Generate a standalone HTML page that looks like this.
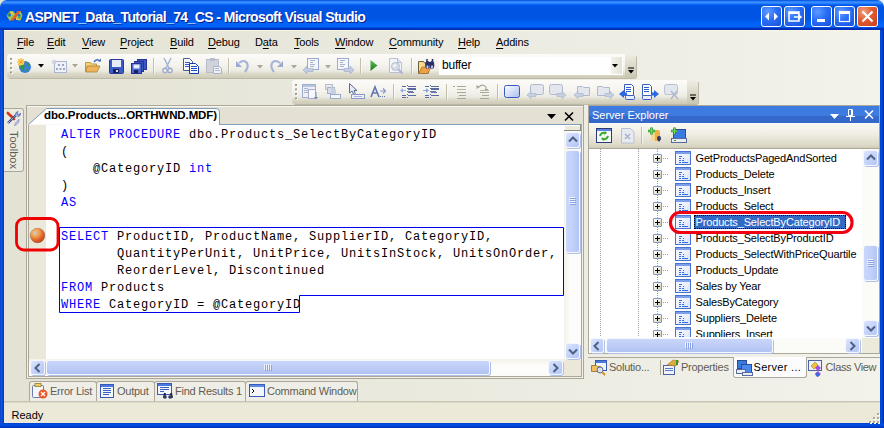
<!DOCTYPE html>
<html><head><meta charset="utf-8">
<style>
*{margin:0;padding:0;box-sizing:border-box}
html,body{width:884px;height:428px;overflow:hidden;background:linear-gradient(to right,#e3e2d4,#f3f2eb)}
body{position:relative;font-family:"Liberation Sans",sans-serif;font-size:11px;color:#000}
.a{position:absolute}
.mono{font-family:"Liberation Mono",monospace}
svg{position:absolute;overflow:visible}
/* window frame */
#title{left:0;top:0;width:884px;height:30px;border-radius:7px 7px 0 0;
background:linear-gradient(to bottom,#0040c8 0px,#1c78ff 1px,#3a8dff 2px,#3a8dff 3px,#1470ff 4px,#0258e8 5px,#0054e3 8px,#0054e3 19px,#005cf0 21px,#0064f8 24px,#0064f8 27px,#0038c8 28px,#0028b0 30px)}
#lb{left:0;top:30px;width:4px;height:398px;background:linear-gradient(to right,#0030b0,#1660e8 1px,#0050e0 2px,#0040d0 3px)}
#rb{left:880px;top:30px;width:4px;height:398px;background:linear-gradient(to right,#0040d0,#0050e0 1px,#0048d8 2px,#0030b0 3px)}
#bb{left:0;top:423px;width:884px;height:5px;background:linear-gradient(to bottom,#0040d0,#0050e8 2px,#0038c0 4px)}
.ttxt{left:25px;top:9px;font-weight:bold;font-size:14px;letter-spacing:-0.6px;color:#fff;text-shadow:1px 1px 0 #0a1e8c}
.tbtn{top:6px;width:21px;height:21px;border:1px solid #fff;border-radius:3px;
background:radial-gradient(circle at 30% 25%,#5d9bff 0%,#2a6ef5 45%,#1650e0 100%)}
.tclose{background:radial-gradient(circle at 30% 25%,#f0a080 0%,#e25a30 45%,#c8401c 100%)}
/* menu */
#menu{left:4px;top:30px;width:876px;height:24px;border-top:1px solid #faf6e0}
.mi{top:7px;font-size:11px;letter-spacing:-0.15px}
.mi u{text-decoration:underline;text-decoration-thickness:1px;text-underline-offset:1.5px}
/* toolbars */
.tb{border-radius:3px;background:linear-gradient(to bottom,#fcfbf8 0%,#f4f3ed 45%,#ecebe2 70%,#dcd9ca 82%,#cdcab7 100%);box-shadow:1px 1px 0 #bcb9a6}
.grip{width:3px;height:16px;background:radial-gradient(circle at 1px 1px,#9a9784 0,#9a9784 1px,transparent 1.2px) 0 0/4px 4.5px,radial-gradient(circle at 2px 2px,#fff 0,#fff 1px,transparent 1.2px) 0 0/4px 4.5px}
.sep{width:1px;height:16px;background:#c2bfac;box-shadow:1px 0 0 rgba(255,255,255,0.5)}

.code{font-family:"Liberation Mono",monospace;font-size:12px;letter-spacing:0.8px;line-height:17px;white-space:pre;color:#000}
.kw{color:#0000ff}
.sbtn{border-radius:3px;background:linear-gradient(135deg,#dbe5fd 0%,#c6d4fa 50%,#b4c6f4 100%);border:1px solid #f4f7fe;box-shadow:1px 1px 0 #b0c0e8}
.thumb{border-radius:3px;background:linear-gradient(to right,#cad8fc,#bfcff9 60%,#b2c4f3);border:1px solid #f4f7fe;box-shadow:1px 1px 0 #b0c0e8}

.pbox{width:9px;height:9px;border:1px solid #7a99c6;border-radius:1px;background:linear-gradient(135deg,#fff,#e8e6d8 60%,#cfcbb4)}
.pbox:after{content:"";position:absolute;left:1px;top:3px;width:5px;height:1px;background:#000;box-shadow:0 0 0 0 #000}
.pbox:before{content:"";position:absolute;left:3px;top:1px;width:1px;height:5px;background:#000}
.tabtxt{color:#5f5d54;font-size:11px;letter-spacing:-0.25px}

.btab{top:381px;height:20px;background:#efeee6;border:1px solid #aca899;border-bottom:none;border-radius:3px 3px 0 0}
</style></head><body>
<svg width="0" height="0" style="position:absolute"><defs><g id="spic"><rect x="0.5" y="0.5" width="15" height="13" fill="url(#spg)" stroke="#4a72d0"/><rect x="1" y="1" width="14" height="2" fill="#7aa0ec"/><path d="M4 5.5h3M4 7.5h2M8 7.5h1M4 9.5h2M7 9.5h2M4 11.5h2M7 11.5h6" stroke="#3a6ae0"/></g><linearGradient id="spg" x1="0" y1="0" x2="1" y2="1"><stop offset="0" stop-color="#ffffff"/><stop offset="1" stop-color="#d8e2fa"/></linearGradient></defs></svg><div id="title" class="a"></div>
<div id="lb" class="a"></div><div id="rb" class="a"></div><div id="bb" class="a"></div>
<div class="a ttxt">ASPNET_Data_Tutorial_74_CS - Microsoft Visual Studio</div>

<div class="a tbtn" style="left:761px"></div>
<div class="a tbtn" style="left:784px"></div>
<div class="a tbtn" style="left:811px"></div>
<div class="a tbtn" style="left:834px"></div>
<div class="a tbtn tclose" style="left:857px"></div>


<!-- title icon -->
<svg style="left:6px;top:10px" width="17" height="12" viewBox="0 0 17 12">
<path d="M0.5 5.5 L4 1 H7 L9.5 4 L12 1 H14.5 L16.5 5.5 L14.5 10.5 H12 L8.5 7 L5 10.5 H3.5Z" fill="#9cc85a"/>
<path d="M1 5.5 L3.5 2 L5 4 L3 7Z" fill="#4a9a3a"/><path d="M15.5 5.5 L13.5 9 L12 7 L14 4Z" fill="#5aa848"/>
<path d="M4 2 H8 L6 5Z M10 8 L13 10 H10Z" fill="#f8c050"/>
<path d="M4 10.5 L12 1 H15 L7.5 10.5Z" fill="#e85a20"/>
<circle cx="3.8" cy="5.3" r="1.2" fill="#1a6af0"/><circle cx="12.8" cy="5.3" r="1.2" fill="#1a6af0"/></svg>
<!-- title buttons glyphs -->
<svg style="left:761px;top:6px" width="21" height="21"><path d="M4 10.5 L8 6.5 L8 14.5Z M17 10.5 L13 6.5 L13 14.5Z" fill="#fff"/></svg>
<svg style="left:784px;top:6px" width="21" height="21"><rect x="5" y="6" width="10" height="9" fill="none" stroke="#fff" stroke-width="1.5"/><rect x="5" y="6" width="10" height="2" fill="#fff"/><path d="M10 11 h7 M14 8.5 L17 11 L14 13.5" stroke="#fff" stroke-width="1.5" fill="none"/></svg>
<svg style="left:811px;top:6px" width="21" height="21"><rect x="6" y="13" width="8" height="3" fill="#fff"/></svg>
<svg style="left:834px;top:6px" width="21" height="21"><rect x="5.5" y="5.5" width="10" height="10" fill="none" stroke="#fff" stroke-width="1.2"/><rect x="5" y="5" width="11" height="3" fill="#fff"/></svg>
<svg style="left:857px;top:6px" width="21" height="21"><path d="M5.5 5.5 L15.5 15.5 M15.5 5.5 L5.5 15.5" stroke="#fff" stroke-width="2.2"/></svg>
<div id="menu" class="a"></div>
<div class="a mi" style="left:17px;top:36px"><u>F</u>ile</div>
<div class="a mi" style="left:47px;top:36px"><u>E</u>dit</div>
<div class="a mi" style="left:82px;top:36px"><u>V</u>iew</div>
<div class="a mi" style="left:120px;top:36px"><u>P</u>roject</div>
<div class="a mi" style="left:170px;top:36px"><u>B</u>uild</div>
<div class="a mi" style="left:208px;top:36px"><u>D</u>ebug</div>
<div class="a mi" style="left:255px;top:36px">D<u>a</u>ta</div>
<div class="a mi" style="left:294px;top:36px"><u>T</u>ools</div>
<div class="a mi" style="left:335px;top:36px"><u>W</u>indow</div>
<div class="a mi" style="left:389px;top:36px"><u>C</u>ommunity</div>
<div class="a mi" style="left:458px;top:36px"><u>H</u>elp</div>
<div class="a mi" style="left:496px;top:36px"><u>A</u>ddins</div>

<div class="a tb" style="left:7px;top:54px;width:629px;height:24px"></div>

<!-- toolbar1 icons -->
<div class="a grip" style="left:10px;top:58px"></div>
<svg style="left:16px;top:58px" width="16" height="16">
<circle cx="9" cy="9" r="6" fill="#3c7ee0"/><path d="M5 6 Q8 5 9 8 Q7 10 8 13 Q5 12 4 9Z M10 4 Q14 5 14 9 Q12 8 11 6Z M10 11 Q13 11 12 14 Q10 14 10 11Z" fill="#2e9a3a"/>
<circle cx="5" cy="4" r="3.2" fill="#fbe07a"/><path d="M5 0v8M1 4h8M2 1l6 6M8 1l-6 6" stroke="#f4a020" stroke-width="0.8"/></svg>
<svg style="left:38px;top:64px" width="7" height="4"><path d="M0 0h6L3 3.5Z" fill="#000"/></svg>
<svg style="left:51px;top:59px" width="17" height="15">
<rect x="3.5" y="2.5" width="12" height="11" fill="#f0f0f6" stroke="#a9b6d3"/><g fill="#9aa8c6"><rect x="7" y="5" width="2" height="2"/><rect x="11" y="5" width="2" height="2"/><rect x="5" y="9" width="2" height="2"/><rect x="8.5" y="9" width="2" height="2"/><rect x="12" y="9" width="2" height="2"/></g>
<path d="M0 3h6M3 0v6M1 1l4 4M5 1l-4 4" stroke="#c8cede" stroke-width="0.8"/></svg>
<svg style="left:72px;top:64px" width="7" height="4"><path d="M0 0h6L3 3.5Z" fill="#aaa797"/></svg>
<svg style="left:85px;top:58px" width="17" height="16">
<path d="M0.5 4.5h5l1 1.5h5v7.5h-11Z" fill="#f5d478" stroke="#b99a48" stroke-width="1"/>
<path d="M2 8h13l-3 6h-11Z" fill="#f2b458" stroke="#a8803a" stroke-width="0.8"/>
<path d="M9 4 Q12 0 15 3" stroke="#4a6ab8" stroke-width="1.5" fill="none"/><path d="M13 3.5h3v-3Z" fill="#4a6ab8"/></svg>
<svg style="left:109px;top:59px" width="15" height="15">
<rect x="0.5" y="0.5" width="14" height="14" rx="1" fill="#3a5cc8" stroke="#2a3a98"/><rect x="3" y="1" width="9" height="7" fill="#e8ecf8"/><rect x="4" y="10" width="6" height="4" fill="#1a2060"/><rect x="7" y="11" width="2" height="2" fill="#dde"/></svg>
<svg style="left:131px;top:59px" width="16" height="15">
<rect x="6.5" y="0.5" width="9" height="10" fill="#3a58c0" stroke="#28309a"/><rect x="3.5" y="2.5" width="9" height="10" fill="#3a58c0" stroke="#28309a"/><rect x="0.5" y="4.5" width="10" height="10" fill="#4a68d0" stroke="#28309a"/><rect x="2.5" y="5.5" width="6" height="4" fill="#e8ecf8"/><rect x="3" y="11" width="4" height="3" fill="#1a2060"/></svg>
<div class="a sep" style="left:153px;top:58px"></div>
<svg style="left:162px;top:58px" width="11" height="16"><path d="M2 0 L7 10 M9 0 L4 10" stroke="#a8b4d0" stroke-width="1.5"/><circle cx="3" cy="12.5" r="2.2" fill="none" stroke="#a0acd0" stroke-width="1.4"/><circle cx="8" cy="12.5" r="2.2" fill="none" stroke="#a0acd0" stroke-width="1.4"/></svg>
<svg style="left:183px;top:58px" width="16" height="16">
<path d="M0.5 0.5h6l3 3v9h-9Z" fill="#f6f8fc" stroke="#4a5c90"/><path d="M2 4.5h5M2 6.5h5M2 8.5h5" stroke="#3060c8"/>
<path d="M6.5 5.5h6l3 3v7h-9Z" fill="#f6f8fc" stroke="#1838a8"/><path d="M8 8.5h6M8 10.5h6M8 12.5h6" stroke="#2050c8"/></svg>
<svg style="left:206px;top:58px" width="17" height="16">
<rect x="0.5" y="1.5" width="12" height="13" fill="#d0d2dc" stroke="#b8bccc"/><rect x="4" y="0" width="5" height="3" fill="#b8bccc"/>
<path d="M7.5 8.5h6l2 2v5h-8Z" fill="#eef0f6" stroke="#a8b2cc"/><path d="M9 10.5h4M9 12.5h5" stroke="#b0b8d0"/></svg>
<div class="a sep" style="left:228px;top:58px"></div>
<svg style="left:236px;top:58px" width="14" height="15"><path d="M3 5 Q8 1 11 5 Q13 9 9 14" stroke="#a6b4d6" stroke-width="2.2" fill="none"/><path d="M0 3v6h6Z" fill="#9aaad0"/></svg>
<svg style="left:257px;top:65px" width="7" height="4"><path d="M0 0h6L3 3.5Z" fill="#aaa797"/></svg>
<svg style="left:269px;top:58px" width="14" height="15"><path d="M11 5 Q6 1 3 5 Q1 9 5 14" stroke="#a6b4d6" stroke-width="2.2" fill="none"/><path d="M14 3v6h-6Z" fill="#9aaad0"/></svg>
<svg style="left:291px;top:65px" width="7" height="4"><path d="M0 0h6L3 3.5Z" fill="#aaa797"/></svg>
<svg style="left:303px;top:58px" width="17" height="16">
<rect x="4.5" y="0.5" width="11" height="11" fill="#f4f6fa" stroke="#9aaad0"/><path d="M7 2.5h5M7 4.5h3M7 6.5h5M7 8.5h4" stroke="#a8b4d0"/>
<path d="M0 12 L4 8 V10.5 H10 V13.5 H4 V16Z" fill="#c4cce0" stroke="#9aa8cc" stroke-width="0.6"/></svg>
<svg style="left:325px;top:65px" width="7" height="4"><path d="M0 0h6L3 3.5Z" fill="#aaa797"/></svg>
<svg style="left:337px;top:58px" width="17" height="16">
<rect x="0.5" y="0.5" width="11" height="11" fill="#f4f6fa" stroke="#9aaad0"/><path d="M3 2.5h5M3 4.5h3M3 6.5h5M3 8.5h4" stroke="#a8b4d0"/>
<path d="M17 12 L13 8 V10.5 H7 V13.5 H13 V16Z" fill="#c4cce0" stroke="#9aa8cc" stroke-width="0.6"/></svg>
<div class="a sep" style="left:360px;top:58px"></div>
<svg style="left:370px;top:60px" width="8" height="12"><defs><linearGradient id="plg" x1="0" y1="0" x2="0" y2="1"><stop offset="0" stop-color="#5ac05a"/><stop offset="1" stop-color="#1a7a1a"/></linearGradient></defs><path d="M0.5 0 L7.5 5.5 L0.5 11Z" fill="url(#plg)"/></svg>
<svg style="left:389px;top:58px" width="17" height="16">
<path d="M0.5 0.5h8l4 4v10h-12Z" fill="#f2f4fa" stroke="#b8c0d8"/><path d="M8.5 0.5v4h4" fill="#dde2f0" stroke="#b8c0d8"/>
<circle cx="6.5" cy="8.5" r="4" fill="#d6dae6" stroke="#b4bccc"/><circle cx="5.5" cy="7.5" r="1.8" fill="#eef0f6"/><path d="M9.5 11.5l4 4" stroke="#a8b4d8" stroke-width="2"/></svg>
<div class="a sep" style="left:411px;top:58px"></div>
<svg style="left:418px;top:58px" width="17" height="16">
<path d="M0.5 3.5h5l1 1.5h4v10h-10Z" fill="#f8dc88" stroke="#6a6040"/><path d="M0.5 15.5 L4 9 h9 l-3 6.5Z" fill="#f0a040" stroke="#8a6020" stroke-width="0.6"/>
<ellipse cx="9.5" cy="7" rx="2.3" ry="4" fill="#2a3068"/><ellipse cx="14" cy="7" rx="2.3" ry="4" fill="#2a3068"/><rect x="9.5" y="4" width="4.5" height="3" fill="#2a3068"/>
<ellipse cx="9.5" cy="9" rx="1" ry="1.8" fill="#c8d0f0"/><ellipse cx="14" cy="9" rx="1" ry="1.8" fill="#c8d0f0"/><path d="M9 1v3M14.5 1v3" stroke="#2a3068" stroke-width="1.5"/></svg>
<!-- combo -->
<div class="a" style="left:439px;top:57px;width:184px;height:18px;background:#fff"></div>
<div class="a" style="left:442px;top:58px;font-size:12px;letter-spacing:-0.2px">buffer</div>
<div class="a" style="left:610px;top:57px;width:12px;height:17px;background:linear-gradient(to right,#f3f2ea,#e4e2d4);border-left:1px solid #fff"></div>
<svg style="left:612px;top:64px" width="7" height="4"><path d="M0 0h6L3 3.5Z" fill="#000"/></svg>
<div class="a" style="left:625px;top:54px;width:11px;height:24px;border-radius:0 3px 3px 0;background:linear-gradient(to bottom,#f0eee4,#d8d5c4 60%,#c8c5b2)"></div><svg style="left:627px;top:67px" width="8" height="8"><path d="M1 1h6" stroke="#000"/><path d="M1 3h6L4 6.5Z" fill="#000"/></svg>
<div class="a tb" style="left:292px;top:80px;width:406px;height:24px"></div>

<!-- toolbar2 icons -->
<div class="a grip" style="left:295px;top:84px"></div>
<svg style="left:302px;top:84px" width="16" height="16">
<rect x="0.5" y="0.5" width="13" height="13" fill="#eef0f6" stroke="#a0acd0"/><rect x="1" y="1" width="12" height="2" fill="#b8c4e0"/><path d="M2 4.5h4M2 6.5h4M2 8.5h4" stroke="#a8b4d0"/>
<rect x="6.5" y="5.5" width="7" height="9" fill="#f8f8fc" stroke="#a0acd0"/><path d="M14 8v7M12.5 13.5l1.5 1.5 1.5-1.5" stroke="#8898c8"/></svg>
<svg style="left:325px;top:84px" width="16" height="16">
<rect x="0.5" y="0.5" width="7" height="5" fill="#e8eaf0" stroke="#b8bccc"/><rect x="2.5" y="3.5" width="7" height="6" fill="#d8dce8" stroke="#a8b0c8"/>
<path d="M6 2 L11 6 V11 H6Z" fill="#c8d0e4"/><rect x="5.5" y="10.5" width="10" height="4" fill="#f4f6fa" stroke="#9aaad0"/></svg>
<svg style="left:349px;top:83px" width="16" height="17">
<path d="M0.5 0.5 V10 L3 8 L5 12 L6.5 11.5 L5 7.5 H8Z" fill="#e8ecf4" stroke="#5a6a98"/><rect x="2.5" y="11.5" width="13" height="4" fill="#eef0f8" stroke="#8898c8"/><path d="M5 13.5h8" stroke="#a8b4d8"/></svg>
<svg style="left:371px;top:85px" width="16" height="14">
<path d="M0 12 L4 2 L8 12 M2 8h4" stroke="#6078b0" stroke-width="1.6" fill="none"/><path d="M9 6h5M12 3.5 L14.5 6 L12 8.5" stroke="#8898c8" stroke-width="1.1" fill="none"/><path d="M9 11.5h1M11 11.5h1M13 11.5h1" stroke="#6078b0"/></svg>
<div class="a sep" style="left:393px;top:84px"></div>
<svg style="left:400px;top:85px" width="17" height="15">
<path d="M7.5 0v15" stroke="#5a6aa0" stroke-dasharray="1 2"/>
<path d="M8 1.5h8M8 7.5h6M8 10.5h8M2 1.5h4M2 10.5h4M2 12.5h4" stroke="#5a6aa0"/><rect x="8" y="3" width="8" height="2" fill="#5a6aa0"/><rect x="8" y="6" width="5" height="2" fill="#6a7ab0"/>
<path d="M0 5.5 L3 3 V8Z" fill="#9ab0e0"/><path d="M2 5.5h4" stroke="#9ab0e0"/></svg>
<svg style="left:423px;top:85px" width="17" height="15">
<path d="M7.5 0v15" stroke="#5a6aa0" stroke-dasharray="1 2"/>
<path d="M8 1.5h8M8 7.5h6M8 10.5h8M2 1.5h4M2 10.5h4M2 12.5h4" stroke="#5a6aa0"/><rect x="8" y="3" width="8" height="2" fill="#5a6aa0"/><rect x="8" y="6" width="5" height="2" fill="#6a7ab0"/>
<path d="M6 5.5 L3 3 V8Z" fill="#8aa4dc"/><path d="M0 5.5h4" stroke="#8aa4dc"/></svg>
<div class="a sep" style="left:446px;top:84px"></div>
<svg style="left:453px;top:85px" width="14" height="15"><path d="M0 1.5h2M4 1.5h9M4 4.5h9M4 7.5h9M6 10.5h7M4 13.5h9" stroke="#a9a796"/><path d="M4 4.5h9" stroke="#b8b6a6"/></svg>
<svg style="left:476px;top:84px" width="14" height="16"><path d="M0.5 1 L0.5 5 L4 3Z" fill="#a9a796"/><path d="M3 3 Q5 0.5 8 1.5 Q11 2.5 9.5 5.5 H12" stroke="#a9a796" fill="none" stroke-width="1.2"/><path d="M4 8.5h9M6 11.5h7M4 14.5h9" stroke="#a9a796"/><path d="M4 6.5h9" stroke="#b8b6a6"/></svg>
<div class="a sep" style="left:497px;top:84px"></div>
<svg style="left:504px;top:85px" width="16" height="14"><rect x="0.5" y="0.5" width="15" height="12" rx="2" fill="url(#bmg)" stroke="#3a58c0"/>
<defs><linearGradient id="bmg" x1="0" y1="0" x2="1" y2="1"><stop offset="0" stop-color="#fff"/><stop offset="1" stop-color="#a8bef0"/></linearGradient></defs></svg>
<svg style="left:527px;top:84px" width="17" height="15"><rect x="3.5" y="0.5" width="13" height="10" rx="2" fill="#e4e6ee" stroke="#b0b8d0"/><path d="M0 11 L4 7.5 V9.5 H9 V12.5 H4 V14.5Z" fill="#c8d0e0" stroke="#a0acd0" stroke-width="0.6"/></svg>
<svg style="left:549px;top:84px" width="17" height="15"><rect x="0.5" y="0.5" width="13" height="10" rx="2" fill="#e4e6ee" stroke="#b0b8d0"/><path d="M17 11 L13 7.5 V9.5 H8 V12.5 H13 V14.5Z" fill="#c8d0e0" stroke="#a0acd0" stroke-width="0.6"/></svg>
<svg style="left:574px;top:84px" width="17" height="15"><path d="M3.5 2.5h5l1 1h6v8h-12Z" fill="#e4e6ee" stroke="#b0b8d0"/><path d="M0 11 L4 7.5 V9.5 H9 V12.5 H4 V14.5Z" fill="#c8d0e0" stroke="#a0acd0" stroke-width="0.6"/></svg>
<svg style="left:597px;top:84px" width="17" height="15"><path d="M0.5 2.5h5l1 1h6v8h-12Z" fill="#e4e6ee" stroke="#b0b8d0"/><path d="M17 11 L13 7.5 V9.5 H8 V12.5 H13 V14.5Z" fill="#c8d0e0" stroke="#a0acd0" stroke-width="0.6"/></svg>
<svg style="left:619px;top:84px" width="17" height="16"><path d="M5.5 0.5h7l2 2v9h-9Z" fill="#fff" stroke="#3a5cc0"/><path d="M7 3.5h5M7 5.5h5M7 7.5h5" stroke="#2a60d0"/><rect x="6.5" y="11.5" width="9" height="4" rx="1" fill="#e8eefa" stroke="#3a5cc0"/><path d="M0 10 L5 6 V8.5 H8 V11.5 H5 V14Z" fill="#2a6ae0"/></svg>
<svg style="left:642px;top:84px" width="17" height="16"><path d="M0.5 0.5h7l2 2v9h-9Z" fill="#fff" stroke="#3a5cc0"/><path d="M2 3.5h5M2 5.5h5M2 7.5h5" stroke="#2a60d0"/><rect x="0.5" y="11.5" width="9" height="4" rx="1" fill="#e8eefa" stroke="#3a5cc0"/><path d="M17 10 L12 6 V8.5 H9 V11.5 H12 V14Z" fill="#2a6ae0"/></svg>
<svg style="left:664px;top:84px" width="16" height="16"><rect x="0.5" y="0.5" width="13" height="10" rx="2" fill="#e4e6ee" stroke="#b8c0d4"/><path d="M7 7 L14 15 M13 7 L7 15" stroke="#b0b8d0" stroke-width="1.5"/></svg>
<div class="a" style="left:687px;top:80px;width:11px;height:24px;border-radius:0 3px 3px 0;background:linear-gradient(to bottom,#f0eee4,#d8d5c4 60%,#c8c5b2)"></div>
<svg style="left:689px;top:94px" width="8" height="8"><path d="M1 1h6" stroke="#000"/><path d="M1 3h6L4 6.5Z" fill="#000"/></svg>

<!-- toolbox tab -->
<div class="a" style="left:4px;top:108px;width:20px;height:64px;background:#ecebe2;border:1px solid #aca899;border-left:none;border-radius:0 3px 3px 0"></div>
<svg style="left:6px;top:110px" width="16" height="17">
<path d="M1.8 3 L8 9" stroke="#d03818" stroke-width="2.6" stroke-linecap="round"/>
<path d="M13 9 Q14 12 10 15 L8.5 15.5 L9.5 13 Z" fill="#c8c8e8" stroke="#8a90c8" stroke-width="0.8"/>
<path d="M2 13 L10 5.2" stroke="#3a4a88" stroke-width="2.4"/><path d="M2 13 L10 5.2" stroke="#eef2fc" stroke-width="1" stroke-dasharray="1 1"/>
<path d="M9.5 5.5 Q9 2 12 1.5 L11 4 L13 5 L14.5 3 Q15 6 11.5 6.8" fill="#a8b8e0" stroke="#5a70b8" stroke-width="0.9"/></svg>
<div class="a" style="left:6px;top:130.5px;width:14px;height:40px;">
<div style="position:absolute;left:14px;top:0;transform-origin:0 0;transform:rotate(90deg);font-size:11px;color:#5f5d54;white-space:nowrap">Toolbox</div></div>

<!-- editor frame -->
<div class="a" style="left:26px;top:105px;width:558px;height:274px;background:#f1efe7;border:1px solid #aca899"></div><div class="a" style="left:27px;top:106px;width:556px;height:18px;background:#e4e1d4;border-top:1px solid #f8f6f0"></div><div class="a" style="left:28px;top:125px;width:554px;height:252px;background:#fff;border:1px solid #aca899;border-top:none"></div>
<div class="a" style="left:219px;top:124px;width:363px;height:1px;background:#7f9db9"></div>
<svg style="left:27px;top:107px" width="200" height="19"><path d="M1.5 17.5 L19.5 1.5 H189 Q192.5 1.5 192.5 5 V18.5" fill="#fff" stroke="#7f9db9"/></svg>
<div class="a" style="left:44px;top:109px;font-weight:bold;font-size:11.5px;letter-spacing:-0.1px">dbo.Products...ORTHWND.MDF)</div>
<svg style="left:547px;top:114px" width="9" height="6"><path d="M0 0h9L4.5 5Z" fill="#000"/></svg>
<svg style="left:564px;top:112px" width="10" height="9"><path d="M1 0.5 L9 8.5 M9 0.5 L1 8.5" stroke="#000" stroke-width="1.6"/></svg>
<!-- editor body -->
<div class="a" style="left:28px;top:125px;width:536px;height:235px;background:#fff;border-left:1px solid #aca899"></div>
<div class="a" style="left:29px;top:125px;width:17px;height:235px;background:#ebe8d9"></div>
<div class="a code" style="left:61px;top:127px"><span class="kw">ALTER PROCEDURE</span> dbo.Products_SelectByCategoryID
(
    @CategoryID <span class="kw">int</span>
)
<span class="kw">AS</span>

<span class="kw">SELECT</span> ProductID, ProductName, SupplierID, CategoryID,
       QuantityPerUnit, UnitPrice, UnitsInStock, UnitsOnOrder,
       ReorderLevel, Discontinued
<span class="kw">FROM</span> Products
<span class="kw">WHERE</span> CategoryID = @CategoryID</div>
<svg style="left:0;top:0" width="884" height="428">
<path d="M59.5 227.5 H563.5 V295.5 H299.5 V312.5 H59.5 Z" fill="none" stroke="#0000f0" stroke-width="1"/>
<rect x="16.5" y="218.5" width="41.5" height="31.5" rx="7.5" fill="none" stroke="#f00000" stroke-width="2.8"/>
<defs><radialGradient id="bpg" cx="0.35" cy="0.3" r="0.8"><stop offset="0" stop-color="#f4b880"/><stop offset="0.35" stop-color="#eea050"/><stop offset="0.6" stop-color="#e46a30"/><stop offset="0.9" stop-color="#c84018"/><stop offset="1" stop-color="#8a4030"/></radialGradient></defs>
<circle cx="37.5" cy="235.5" r="7.4" fill="url(#bpg)" stroke="#7a7870" stroke-width="0.6" stroke-opacity="0.6"/><path d="M33 231.5h3.5v2.5l-1.5 1.5v-1h-2z" fill="#c4c8c8"/>
</svg>
<!-- editor vscroll -->
<div class="a" style="left:564px;top:125px;width:17px;height:235px;background:linear-gradient(to right,#f3f1ea,#fdfdfb 40%,#fbfbf8)"></div>
<div class="a" style="left:564px;top:125px;width:17px;height:6px;background:#eceadb;border-right:1px solid #8d8b7e;border-bottom:1px solid #8d8b7e;box-shadow:inset 1px 1px 0 #fff"></div>
<div class="a sbtn" style="left:565px;top:132px;width:15px;height:16px"></div>
<svg style="left:568px;top:136px" width="10" height="7"><path d="M1 5.5 L5 1.5 L9 5.5" stroke="#4d6185" stroke-width="2" fill="none"/></svg>
<div class="a thumb" style="left:565px;top:150px;width:15px;height:103px"></div>
<svg style="left:569px;top:197px" width="8" height="9"><path d="M0 0.5h6M0 2.5h6M0 4.5h6M0 6.5h6" stroke="#eef2fe"/><path d="M1 1.5h6M1 3.5h6M1 5.5h6M1 7.5h6" stroke="#8ca4e4"/></svg>
<div class="a sbtn" style="left:565px;top:343px;width:15px;height:16px"></div>
<svg style="left:568px;top:348px" width="10" height="7"><path d="M1 1.5 L5 5.5 L9 1.5" stroke="#4d6185" stroke-width="2" fill="none"/></svg>
<!-- editor hscroll -->
<div class="a" style="left:29px;top:359px;width:535px;height:17px;background:linear-gradient(to bottom,#f3f1ea,#fdfdfb 40%,#fbfbf8)"></div>
<div class="a sbtn" style="left:30px;top:360px;width:15px;height:15px"></div>
<svg style="left:34px;top:363px" width="7" height="10"><path d="M5.5 1 L1.5 5 L5.5 9" stroke="#4d6185" stroke-width="2" fill="none"/></svg>
<div class="a thumb" style="left:46px;top:360px;width:444px;height:15px;background:linear-gradient(to bottom,#c9d6fb,#bccbf6 60%,#b0c2f2)"></div>
<svg style="left:264px;top:364px" width="9" height="8"><path d="M0.5 0v6M2.5 0v6M4.5 0v6M6.5 0v6" stroke="#eef2fe"/><path d="M1.5 1v6M3.5 1v6M5.5 1v6M7.5 1v6" stroke="#8ca4e4"/></svg>
<div class="a sbtn" style="left:548px;top:360px;width:15px;height:15px"></div>
<svg style="left:552px;top:363px" width="7" height="10"><path d="M1.5 1 L5.5 5 L1.5 9" stroke="#4d6185" stroke-width="2" fill="none"/></svg>
<div class="a" style="left:564px;top:360px;width:17px;height:16px;background:#ebe8da"></div>

<!-- server explorer -->

<div class="a" style="left:588px;top:105px;width:292px;height:249px;border:1px solid #aca899;background:#fff"></div>
<div class="a" style="left:589px;top:106px;width:290px;height:17px;background:linear-gradient(to bottom,#3d7be0 0,#3d7be0 10px,#3468ca 10px)"></div>
<div class="a" style="left:592px;top:109px;color:#fff;font-size:11px">Server Explorer</div>
<svg style="left:830px;top:114px" width="9" height="6"><path d="M0 0h9L4.5 5Z" fill="#fff"/></svg>
<svg style="left:845px;top:109px" width="11" height="13"><path d="M3.5 0.5v6h4v-6z" stroke="#fff" fill="none"/><path d="M6 1v5h1v-5z" fill="#fff"/><path d="M1 7.5h9" stroke="#fff"/><path d="M5.5 8v4" stroke="#fff"/></svg>
<svg style="left:864px;top:110px" width="10" height="9"><path d="M1 0.5 L9 8.5 M9 0.5 L1 8.5" stroke="#fff" stroke-width="1.5"/></svg>
<div class="a" style="left:589px;top:123px;width:290px;height:26px;background:linear-gradient(to bottom,#faf9f4 0%,#eeece2 45%,#dcd9c8 85%,#cac6b0 100%)"></div>
<svg style="left:596px;top:128px" width="17" height="16"><rect x="0.5" y="0.5" width="15" height="14" fill="#f4f6fc" stroke="#2a3a78"/><rect x="1" y="1" width="14" height="2" fill="#5a84e0"/><path d="M4 8 Q5 4 9 5 M12 8 Q11 12 7 11" stroke="#3aaa22" stroke-width="2" fill="none"/><path d="M9 3 L11 5 L8 7Z M7 9 L5 11 L8 13Z" fill="#3aaa22"/></svg>
<svg style="left:621px;top:128px" width="14" height="16"><path d="M0.5 0.5h9l3.5 3.5v11h-12.5Z" fill="#e8eaf2" stroke="#b8c0d4"/><path d="M4 6l5 5M9 6l-5 5" stroke="#a8b0c8" stroke-width="1.4"/></svg>
<div class="a sep" style="left:641px;top:127px;height:17px"></div>
<svg style="left:647px;top:127px" width="18" height="18"><rect x="4" y="3" width="9" height="11" rx="2" fill="#f0b048"/><rect x="4" y="3" width="4" height="11" fill="#f8d88a"/><path d="M10 12 L12 15 L14 12Z" fill="#2a3060"/><circle cx="12" cy="11" r="2" fill="#303868"/><path d="M1 4h7M4.5 0.5v7" stroke="#2a9a2a" stroke-width="2.6"/><path d="M1.5 4h6M4.5 1v6" stroke="#7ad86a" stroke-width="1"/></svg>
<svg style="left:670px;top:127px" width="17" height="17"><rect x="3.5" y="2.5" width="12" height="9" fill="#3a7ae0" stroke="#2a4a9a"/><rect x="1.5" y="11.5" width="15" height="4" fill="#e8ecf4" stroke="#5a6a9a"/><path d="M4 13.5h2" stroke="#3aa030"/><path d="M1 4h7M4.5 0.5v7" stroke="#2a9a2a" stroke-width="2.6"/><path d="M1.5 4h6M4.5 1v6" stroke="#7ad86a" stroke-width="1"/></svg>
<div class="a" style="left:589px;top:148px;width:290px;height:1px;background:#aca899"></div>
<svg style="left:0;top:0" width="884" height="428"><g stroke="#a0a0a0" stroke-dasharray="1 1">
<path d="M600.5 149v189 M638.5 149v189 M657.5 149v189"/>
<path d="M663 158.5h6 M663 174.5h6 M663 190.5h6 M663 206.5h6 M663 222.5h6 M663 238.5h6 M663 254.5h6 M663 270.5h6 M663 286.5h6 M663 302.5h6 M663 318.5h6 M663 334.5h6"/></g></svg>
<div class="a pbox" style="left:653px;top:154px"></div><svg style="left:675px;top:151px" width="16" height="15"><use href="#spic"/></svg><div class="a" style="left:695.5px;letter-spacing:-0.15px;top:152px">GetProductsPagedAndSorted</div><div class="a pbox" style="left:653px;top:170px"></div><svg style="left:675px;top:167px" width="16" height="15"><use href="#spic"/></svg><div class="a" style="left:695.5px;letter-spacing:-0.15px;top:168px">Products_Delete</div><div class="a pbox" style="left:653px;top:186px"></div><svg style="left:675px;top:183px" width="16" height="15"><use href="#spic"/></svg><div class="a" style="left:695.5px;letter-spacing:-0.15px;top:184px">Products_Insert</div><div class="a pbox" style="left:653px;top:202px"></div><svg style="left:675px;top:199px" width="16" height="15"><use href="#spic"/></svg><div class="a" style="left:695.5px;letter-spacing:-0.15px;top:200px">Products_Select</div><div class="a pbox" style="left:653px;top:218px"></div><svg style="left:675px;top:215px" width="16" height="15"><use href="#spic"/></svg><div class="a" style="left:694px;top:215px;width:152px;height:14px;background:#316ac5;outline:1px dotted #000;outline-offset:-1px"></div><div class="a" style="left:695.5px;letter-spacing:-0.15px;top:216px;color:#fff">Products_SelectByCategoryID</div><div class="a pbox" style="left:653px;top:234px"></div><svg style="left:675px;top:231px" width="16" height="15"><use href="#spic"/></svg><div class="a" style="left:695.5px;letter-spacing:-0.15px;top:232px">Products_SelectByProductID</div><div class="a pbox" style="left:653px;top:250px"></div><svg style="left:675px;top:247px" width="16" height="15"><use href="#spic"/></svg><div class="a" style="left:695.5px;letter-spacing:-0.15px;top:248px">Products_SelectWithPriceQuartile</div><div class="a pbox" style="left:653px;top:266px"></div><svg style="left:675px;top:263px" width="16" height="15"><use href="#spic"/></svg><div class="a" style="left:695.5px;letter-spacing:-0.15px;top:264px">Products_Update</div><div class="a pbox" style="left:653px;top:282px"></div><svg style="left:675px;top:279px" width="16" height="15"><use href="#spic"/></svg><div class="a" style="left:695.5px;letter-spacing:-0.15px;top:280px">Sales by Year</div><div class="a pbox" style="left:653px;top:298px"></div><svg style="left:675px;top:295px" width="16" height="15"><use href="#spic"/></svg><div class="a" style="left:695.5px;letter-spacing:-0.15px;top:296px">SalesByCategory</div><div class="a pbox" style="left:653px;top:314px"></div><svg style="left:675px;top:311px" width="16" height="15"><use href="#spic"/></svg><div class="a" style="left:695.5px;letter-spacing:-0.15px;top:312px">Suppliers_Delete</div><div class="a pbox" style="left:653px;top:330px"></div><svg style="left:675px;top:327px" width="16" height="15"><use href="#spic"/></svg><div class="a" style="left:695.5px;letter-spacing:-0.15px;top:328px">Suppliers_Insert</div>
<div class="a" style="left:589px;top:337px;width:290px;height:1px;background:#fff"></div>
<svg style="left:0;top:0" width="884" height="428"><g fill="none" stroke="#f00010" stroke-width="3.2"><rect x="670.5" y="212.5" width="181.5" height="20" rx="9.5"/></g></svg>
<!-- panel vscroll -->
<div class="a" style="left:862px;top:149px;width:17px;height:189px;background:#fbfbf8"></div>
<div class="a sbtn" style="left:863px;top:150px;width:15px;height:16px"></div>
<svg style="left:866px;top:154px" width="10" height="7"><path d="M1 5.5 L5 1.5 L9 5.5" stroke="#4d6185" stroke-width="2" fill="none"/></svg>
<div class="a thumb" style="left:863px;top:245px;width:15px;height:36px"></div>
<svg style="left:867px;top:259px" width="8" height="9"><path d="M0 0.5h6M0 2.5h6M0 4.5h6M0 6.5h6" stroke="#eef2fe"/><path d="M1 1.5h6M1 3.5h6M1 5.5h6M1 7.5h6" stroke="#8ca4e4"/></svg>
<div class="a sbtn" style="left:863px;top:320px;width:15px;height:16px"></div>
<svg style="left:866px;top:325px" width="10" height="7"><path d="M1 1.5 L5 5.5 L9 1.5" stroke="#4d6185" stroke-width="2" fill="none"/></svg>
<!-- panel hscroll -->
<div class="a" style="left:589px;top:338px;width:273px;height:15px;background:#fbfbf8"></div>
<div class="a sbtn" style="left:590px;top:338px;width:14px;height:15px"></div>
<svg style="left:593px;top:341px" width="7" height="10"><path d="M5.5 1 L1.5 5 L5.5 9" stroke="#4d6185" stroke-width="2" fill="none"/></svg>
<div class="a thumb" style="left:606px;top:338px;width:167px;height:15px;background:linear-gradient(to bottom,#c9d6fb,#bccbf6 60%,#b0c2f2)"></div>
<svg style="left:685px;top:342px" width="9" height="8"><path d="M0.5 0v6M2.5 0v6M4.5 0v6M6.5 0v6" stroke="#eef2fe"/><path d="M1.5 1v6M3.5 1v6M5.5 1v6M7.5 1v6" stroke="#8ca4e4"/></svg>
<div class="a sbtn" style="left:845px;top:338px;width:15px;height:15px"></div>
<svg style="left:849px;top:341px" width="7" height="10"><path d="M1.5 1 L5.5 5 L1.5 9" stroke="#4d6185" stroke-width="2" fill="none"/></svg>
<div class="a" style="left:862px;top:338px;width:17px;height:15px;background:#eceadb"></div>
<!-- panel tabs -->
<div class="a" style="left:588px;top:357px;width:292px;height:1px;background:#aca899"></div>
<div class="a" style="left:733px;top:357px;width:74px;height:21px;background:#fcfcfe;border:1px solid #aca899;border-top:none;border-radius:0 0 3px 3px"></div>
<svg style="left:591px;top:360px" width="17" height="16"><rect x="4.5" y="0.5" width="11" height="10" fill="#eef2fa" stroke="#3a5ab0"/><rect x="5" y="1" width="10" height="2" fill="#4a7ae0"/><path d="M0.5 5.5h5l1 1h3v5h-9Z" fill="#f0c060" stroke="#a08040"/><circle cx="9" cy="10" r="3" fill="#d8e0f0" stroke="#5a6a9a"/><path d="M11 12l3 3" stroke="#d09020" stroke-width="2"/></svg>
<div class="a tabtxt" style="left:609px;top:361px">Solutio...</div>
<div class="a" style="left:660px;top:360px;width:1px;height:15px;background:#aca899"></div>
<svg style="left:663px;top:359px" width="17" height="17"><rect x="0.5" y="6.5" width="11" height="9" fill="#eef2fa" stroke="#4a62a8"/><path d="M2 9.5h8M2 11.5h8" stroke="#5a7ac8"/><path d="M4 6 L10 1 L16 2 L13 7Z" fill="#e0a840" stroke="#a87820" stroke-width="0.6"/><path d="M14 1v5" stroke="#2a9a2a" stroke-width="2"/></svg>
<div class="a tabtxt" style="left:681px;top:361px">Properties</div>
<svg style="left:736px;top:360px" width="17" height="16"><rect x="1.5" y="0.5" width="9" height="8" fill="#3a7ae0" stroke="#2a4a9a"/><rect x="5.5" y="4.5" width="10" height="8" fill="#4a8af0" stroke="#2a4a9a"/><rect x="0.5" y="9.5" width="9" height="4" fill="#e8ecf4" stroke="#5a6a9a"/><rect x="6.5" y="12.5" width="10" height="3" fill="#e8ecf4" stroke="#5a6a9a"/></svg>
<div class="a" style="left:753.5px;top:361px;font-size:11px;letter-spacing:0.3px">Server ...</div>
<svg style="left:808px;top:360px" width="17" height="17"><rect x="0.5" y="0.5" width="13" height="10" fill="#eef2fa" stroke="#4a62a8"/><path d="M3 6 L7 2 L10 5 L6 9Z" fill="#f0c040" stroke="#a08020" stroke-width="0.6"/><path d="M10 5 L13 8 L10 11 L7 8Z M10 11 L13 14 L10 17 L7 14Z" fill="#a050d8"/><path d="M9 12 L12 15 L9 17 L7 14Z" fill="#3a6ae0"/></svg>
<div class="a tabtxt" style="left:825.5px;top:361px;font-size:11px;letter-spacing:-0.35px">Class View</div>

<!-- bottom tabs -->

<div class="a btab" style="left:29px;width:68px"></div>
<div class="a btab" style="left:96px;width:59px"></div>
<div class="a btab" style="left:154px;width:92px"></div>
<div class="a btab" style="left:245px;width:113px"></div>
<svg style="left:32px;top:383px" width="16" height="16"><rect x="0.5" y="2.5" width="11" height="12" rx="1" fill="#f4f6fc" stroke="#6a7ab0"/><rect x="3" y="0.5" width="6" height="3" fill="#f0d060" stroke="#a09040"/><circle cx="11" cy="11" r="4.5" fill="#e85a28"/><path d="M9 9l4 4M13 9l-4 4" stroke="#fff" stroke-width="1.3"/></svg>
<div class="a tabtxt" style="left:50px;top:385px">Error List</div>
<svg style="left:100px;top:384px" width="14" height="14"><rect x="0.5" y="0.5" width="13" height="13" fill="#f4f6fc" stroke="#3a5ab8"/><rect x="1" y="1" width="12" height="2" fill="#4a7ae0"/><path d="M3 4.5h8M3 6.5h8M3 8.5h8M3 10.5h6" stroke="#3a62c0"/></svg>
<div class="a tabtxt" style="left:117px;top:385px">Output</div>
<svg style="left:157px;top:383px" width="17" height="16"><rect x="0.5" y="0.5" width="14" height="11" fill="#f4f6fc" stroke="#3a5ab8"/><rect x="1" y="1" width="13" height="2" fill="#4a7ae0"/><path d="M3 4.5h9M3 6.5h9M3 8.5h4" stroke="#3a62c0"/><path d="M8 10 L7 15 M14 10 L15 15" stroke="#202848" stroke-width="2"/><circle cx="8" cy="14" r="1.8" fill="#303868"/><circle cx="13" cy="14" r="1.8" fill="#303868"/></svg>
<div class="a tabtxt" style="left:175px;top:385px">Find Results 1</div>
<svg style="left:249px;top:384px" width="16" height="14"><rect x="0.5" y="0.5" width="15" height="12" fill="#f4f6fc" stroke="#3a5ab8"/><rect x="1" y="1" width="14" height="2" fill="#5a8ae8"/><path d="M3 5 L5 7 L3 9" stroke="#000" fill="none"/></svg>
<div class="a tabtxt" style="left:267px;top:385px">Command Window</div>
<!-- status bar -->
<div class="a" style="left:4px;top:401px;width:876px;height:22px;background:#ece9d8;border-top:1px solid #c7c4b3;box-shadow:inset 0 1px 0 #dcd9c8"></div>
<div class="a" style="left:11.5px;top:409px;font-size:11px">Ready</div>
<svg style="left:866px;top:410px" width="14" height="14"><g fill="#fff"><rect x="12" y="4" width="2" height="2"/><rect x="8" y="8" width="2" height="2"/><rect x="12" y="8" width="2" height="2"/><rect x="4" y="12" width="2" height="2"/><rect x="8" y="12" width="2" height="2"/><rect x="12" y="12" width="2" height="2"/></g><g fill="#aeab98"><rect x="11" y="3" width="2" height="2"/><rect x="7" y="7" width="2" height="2"/><rect x="11" y="7" width="2" height="2"/><rect x="3" y="11" width="2" height="2"/><rect x="7" y="11" width="2" height="2"/><rect x="11" y="11" width="2" height="2"/></g></svg>

</body></html>
